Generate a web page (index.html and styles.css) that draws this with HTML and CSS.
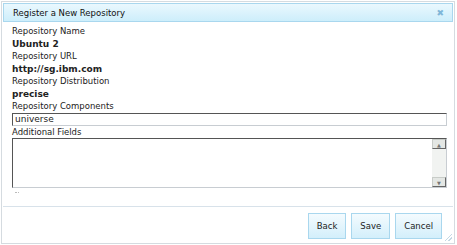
FILE: index.html
```html
<!DOCTYPE html>
<html lang="en">

<head>
    <meta charset="UTF-8" />
    <title>Register a New Repository</title>
    <link rel="stylesheet" href="styles.css">
</head>

<body>
    <div class="dialog">
        <!-- Barra de título -->
        <div class="titlebar">
            <span class="title">Register a New Repository</span>
            <span class="close">&#x2716;</span>
        </div>

        <form class="content">
            <div class="label">Repository Name</div>
            <div class="value">Ubuntu 2</div>
            <div class="label">Repository URL</div>
            <div class="value">http://sg.ibm.com</div>
            <div class="label">Repository Distribution</div>
            <div class="value">precise</div>
            <div class="label">Repository Components</div>
            <input type="text" class="field" value="universe">
            <div class="label">Additional Fields</div>
            <div class="area">
                <div class="area-text"></div>
                <div class="scroll">
                    <span class="arrow">&#x25B2;</span>
                    <span class="arrow">&#x25BC;</span>
                </div>
            </div>
            <div class="grip-small"></div>
        </form>

        <!-- Botões -->
        <div class="buttons">
            <button type="button">Back</button>
            <button type="button">Save</button>
            <button type="button">Cancel</button>
        </div>
        <div class="grip"></div>
    </div>
</body>

</html>
```

FILE: styles.css
```css
* {
    box-sizing: border-box;
}

body {
    margin: 0;
    width: 457px;
    height: 245px;
    background: #fff;
    font-family: "DejaVu Sans", Verdana, sans-serif;
    font-size: 8.5px;
    color: #222;
}

.dialog {
    position: relative;
    margin: 1px;
    width: 454px;
    height: 243px;
    border: 1px solid #d5dbe0;
    padding: 1px;
}

.titlebar {
    display: flex;
    justify-content: space-between;
    align-items: center;
    height: 19px;
    padding: 0 8px 0 9px;
    border: 1px solid #a9d7ee;
    background: linear-gradient(#eaf8fe, #cdeefb);
}

.title {
    color: #111;
}

.close {
    color: #7fb6d8;
    font-size: 9px;
}

.content {
    padding: 3px 7px 0 9px;
    height: 185px;
    border-bottom: 1px solid #d8e2ea;
}

.label {
    height: 12.5px;
    line-height: 13px;
}

.value {
    height: 12.5px;
    line-height: 12.5px;
    font-size: 9px;
    font-weight: bold;
}

.field {
    display: block;
    width: 435px;
    height: 13px;
    margin: 0;
    padding: 0 2px;
    border: 1px solid #c8cdd2;
    border-top-color: #555;
    border-left-color: #555;
    font-family: inherit;
    font-size: 9px;
    color: #222;
}

.area {
    display: flex;
    width: 435px;
    height: 50px;
    border: 1px solid #c8cdd2;
    border-top-color: #555;
    border-left-color: #555;
}

.area-text {
    flex: 1;
}

.scroll {
    width: 14px;
    display: flex;
    flex-direction: column;
    justify-content: space-between;
    background: #f1f3f1;
}

.arrow {
    height: 10px;
    line-height: 10px;
    text-align: center;
    font-size: 5px;
    color: #777;
    background: #e4e7e4;
    border: 1px solid #c8ccc8;
    border-right-color: #666;
    border-bottom-color: #666;
}

.grip-small {
    width: 4px;
    height: 3px;
    margin: 2px 0 0 3px;
    border-bottom: 1px dotted #bbb;
}

.buttons {
    display: flex;
    justify-content: flex-end;
    gap: 5px;
    padding: 6px 11px 0 0;
}

.buttons button {
    height: 26px;
    padding: 0 8px;
    border: 1px solid #a9d7ee;
    background: linear-gradient(#f4fbfe, #d3effb);
    font-family: inherit;
    font-size: 8.5px;
    color: #222;
}

.grip {
    position: absolute;
    right: 2px;
    bottom: 2px;
    width: 7px;
    height: 7px;
    background: linear-gradient(135deg, transparent 45%, #c4d8e4 45%, #c4d8e4 55%, transparent 55%, transparent 70%, #c4d8e4 70%, #c4d8e4 80%, transparent 80%);
}
```
